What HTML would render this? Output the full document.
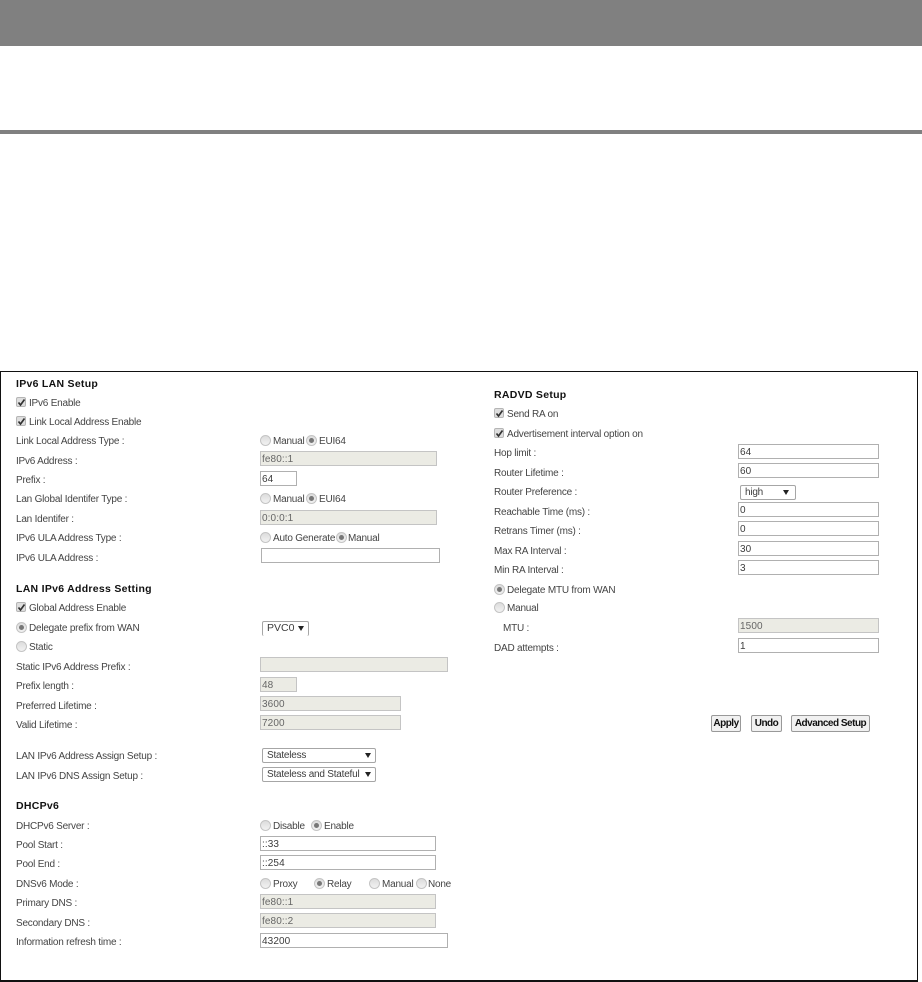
<!DOCTYPE html>
<html><head><meta charset="utf-8"><style>
html,body{margin:0;padding:0;background:#fff}
#p{position:relative;width:922px;height:982px;overflow:hidden;background:#fff;font-family:"Liberation Sans",Arial,sans-serif;font-size:10px;letter-spacing:-.22px;color:#444}
#p div{position:absolute;box-sizing:border-box;white-space:nowrap}
#f{left:0;top:0;width:922px;height:982px;filter:blur(.3px)}
.t{height:14px;line-height:14px;margin-top:1px}
.h{height:14px;line-height:14px;font-weight:bold;color:#111;font-size:10.5px;letter-spacing:.28px}
.i{border:1px solid #b0b0b0;background:#fff;height:15px;line-height:15px;padding-left:1px;color:#3c3c3c;letter-spacing:.1px}
.d{background:#ebebe4;color:#666;border-color:#c4c4c4}
.s{border:1px solid #a6a6a6;border-radius:2px;background:#fff;height:15px;line-height:13px;padding-left:4px;color:#3c3c3c}
.s b{position:absolute;right:4px;top:4px;width:0;height:0;border-left:3px solid transparent;border-right:3px solid transparent;border-top:5px solid #222}
.r{width:11px;height:11px;border-radius:50%;border:1px solid #c4c4c4;background:linear-gradient(#dcdcdc,#f2f2f2)}
.r.o:after{content:"";position:absolute;left:2px;top:2px;width:5px;height:5px;border-radius:50%;background:#777}
.c{width:10px;height:10px;border:1px solid #b5b5b5;border-radius:2px;background:#dedede}
.c svg{position:absolute;left:0;top:0}
.b{height:17px;line-height:15px;border:1px solid #999;border-radius:2px;background:#f1f1f1;font-weight:bold;color:#111;text-align:center;font-size:10px;letter-spacing:-.5px}
</style></head><body><div id="p">
<div style="left:0;top:0;width:922px;height:46px;background:#808080"></div>
<div style="left:0;top:130px;width:922px;height:4px;background:#808080"></div>
<div style="left:0;top:371px;width:918px;height:611px;border:1.5px solid #111;border-bottom-width:2px"></div>
<div id="f">
<div class="h" style="left:16px;top:377px">IPv6 LAN Setup</div>
<div class="c" style="left:16px;top:397px"><svg width="9" height="9" viewBox="0 0 9 9"><path d="M1.5 4.5L3.5 7L7.5 1.5" fill="none" stroke="#333" stroke-width="1.7"/></svg></div>
<div class="t" style="left:29px;top:396px">IPv6 Enable</div>
<div class="c" style="left:16px;top:416px"><svg width="9" height="9" viewBox="0 0 9 9"><path d="M1.5 4.5L3.5 7L7.5 1.5" fill="none" stroke="#333" stroke-width="1.7"/></svg></div>
<div class="t" style="left:29px;top:415px">Link Local Address Enable</div>
<div class="t" style="left:16px;top:434px">Link Local Address Type :</div>
<div class="r" style="left:260px;top:435px"></div><div class="t" style="left:273px;top:434px">Manual</div>
<div class="r o" style="left:306px;top:435px"></div><div class="t" style="left:319px;top:434px">EUI64</div>
<div class="t" style="left:16px;top:454px">IPv6 Address :</div>
<div class="i d" style="left:260px;top:451px;width:177px">fe80::1</div>
<div class="t" style="left:16px;top:473px">Prefix :</div>
<div class="i" style="left:260px;top:471px;width:37px">64</div>
<div class="t" style="left:16px;top:492px">Lan Global Identifer Type :</div>
<div class="r" style="left:260px;top:493px"></div><div class="t" style="left:273px;top:492px">Manual</div>
<div class="r o" style="left:306px;top:493px"></div><div class="t" style="left:319px;top:492px">EUI64</div>
<div class="t" style="left:16px;top:512px">Lan Identifer :</div>
<div class="i d" style="left:260px;top:510px;width:177px">0:0:0:1</div>
<div class="t" style="left:16px;top:531px">IPv6 ULA Address Type :</div>
<div class="r" style="left:260px;top:532px"></div><div class="t" style="left:273px;top:531px">Auto Generate</div>
<div class="r o" style="left:336px;top:532px"></div><div class="t" style="left:348px;top:531px">Manual</div>
<div class="t" style="left:16px;top:551px">IPv6 ULA Address :</div>
<div class="i" style="left:261px;top:548px;width:179px"></div>

<div class="h" style="left:16px;top:582px">LAN IPv6 Address Setting</div>
<div class="c" style="left:16px;top:602px"><svg width="9" height="9" viewBox="0 0 9 9"><path d="M1.5 4.5L3.5 7L7.5 1.5" fill="none" stroke="#333" stroke-width="1.7"/></svg></div>
<div class="t" style="left:29px;top:601px">Global Address Enable</div>
<div class="r o" style="left:16px;top:622px"></div><div class="t" style="left:29px;top:621px">Delegate prefix from WAN</div>
<div class="s" style="left:262px;top:621px;width:47px;height:15px;border-bottom:0;font-size:10.5px;letter-spacing:0">PVC0<b></b></div>
<div class="r" style="left:16px;top:641px"></div><div class="t" style="left:29px;top:640px">Static</div>
<div class="t" style="left:16px;top:660px">Static IPv6 Address Prefix :</div>
<div class="i d" style="left:260px;top:657px;width:188px"></div>
<div class="t" style="left:16px;top:679px">Prefix length :</div>
<div class="i d" style="left:260px;top:677px;width:37px">48</div>
<div class="t" style="left:16px;top:699px">Preferred Lifetime :</div>
<div class="i d" style="left:260px;top:696px;width:141px">3600</div>
<div class="t" style="left:16px;top:718px">Valid Lifetime :</div>
<div class="i d" style="left:260px;top:715px;width:141px">7200</div>
<div class="t" style="left:16px;top:749px">LAN IPv6 Address Assign Setup :</div>
<div class="s" style="left:262px;top:748px;width:114px">Stateless<b></b></div>
<div class="t" style="left:16px;top:769px">LAN IPv6 DNS Assign Setup :</div>
<div class="s" style="left:262px;top:767px;width:114px">Stateless and Stateful<b></b></div>

<div class="h" style="left:16px;top:799px">DHCPv6</div>
<div class="t" style="left:16px;top:819px">DHCPv6 Server :</div>
<div class="r" style="left:260px;top:820px"></div><div class="t" style="left:273px;top:819px">Disable</div>
<div class="r o" style="left:311px;top:820px"></div><div class="t" style="left:324px;top:819px">Enable</div>
<div class="t" style="left:16px;top:838px">Pool Start :</div>
<div class="i" style="left:260px;top:836px;width:176px">::33</div>
<div class="t" style="left:16px;top:857px">Pool End :</div>
<div class="i" style="left:260px;top:855px;width:176px">::254</div>
<div class="t" style="left:16px;top:877px">DNSv6 Mode :</div>
<div class="r" style="left:260px;top:878px"></div><div class="t" style="left:273px;top:877px">Proxy</div>
<div class="r o" style="left:314px;top:878px"></div><div class="t" style="left:327px;top:877px">Relay</div>
<div class="r" style="left:369px;top:878px"></div><div class="t" style="left:382px;top:877px">Manual</div>
<div class="r" style="left:416px;top:878px"></div><div class="t" style="left:428px;top:877px">None</div>
<div class="t" style="left:16px;top:896px">Primary DNS :</div>
<div class="i d" style="left:260px;top:894px;width:176px">fe80::1</div>
<div class="t" style="left:16px;top:916px">Secondary DNS :</div>
<div class="i d" style="left:260px;top:913px;width:176px">fe80::2</div>
<div class="t" style="left:16px;top:935px">Information refresh time :</div>
<div class="i" style="left:260px;top:933px;width:188px">43200</div>

<div class="h" style="left:494px;top:388px">RADVD Setup</div>
<div class="c" style="left:494px;top:408px"><svg width="9" height="9" viewBox="0 0 9 9"><path d="M1.5 4.5L3.5 7L7.5 1.5" fill="none" stroke="#333" stroke-width="1.7"/></svg></div>
<div class="t" style="left:507px;top:407px">Send RA on</div>
<div class="c" style="left:494px;top:428px"><svg width="9" height="9" viewBox="0 0 9 9"><path d="M1.5 4.5L3.5 7L7.5 1.5" fill="none" stroke="#333" stroke-width="1.7"/></svg></div>
<div class="t" style="left:507px;top:427px">Advertisement interval option on</div>
<div class="t" style="left:494px;top:446px">Hop limit :</div>
<div class="i" style="left:738px;top:444px;width:141px">64</div>
<div class="t" style="left:494px;top:466px">Router Lifetime :</div>
<div class="i" style="left:738px;top:463px;width:141px">60</div>
<div class="t" style="left:494px;top:485px">Router Preference :</div>
<div class="s" style="left:740px;top:485px;width:56px">high<b style="right:6px"></b></div>
<div class="t" style="left:494px;top:505px">Reachable Time (ms) :</div>
<div class="i" style="left:738px;top:502px;width:141px">0</div>
<div class="t" style="left:494px;top:524px">Retrans Timer (ms) :</div>
<div class="i" style="left:738px;top:521px;width:141px">0</div>
<div class="t" style="left:494px;top:544px">Max RA Interval :</div>
<div class="i" style="left:738px;top:541px;width:141px">30</div>
<div class="t" style="left:494px;top:563px">Min RA Interval :</div>
<div class="i" style="left:738px;top:560px;width:141px">3</div>
<div class="r o" style="left:494px;top:584px"></div><div class="t" style="left:507px;top:583px">Delegate MTU from WAN</div>
<div class="r" style="left:494px;top:602px"></div><div class="t" style="left:507px;top:601px">Manual</div>
<div class="t" style="left:503px;top:621px">MTU :</div>
<div class="i d" style="left:738px;top:618px;width:141px">1500</div>
<div class="t" style="left:494px;top:641px">DAD attempts :</div>
<div class="i" style="left:738px;top:638px;width:141px">1</div>
<div class="b" style="left:711px;top:715px;width:30px">Apply</div>
<div class="b" style="left:751px;top:715px;width:31px">Undo</div>
<div class="b" style="left:791px;top:715px;width:79px">Advanced Setup</div>
</div>
</div></body></html>
